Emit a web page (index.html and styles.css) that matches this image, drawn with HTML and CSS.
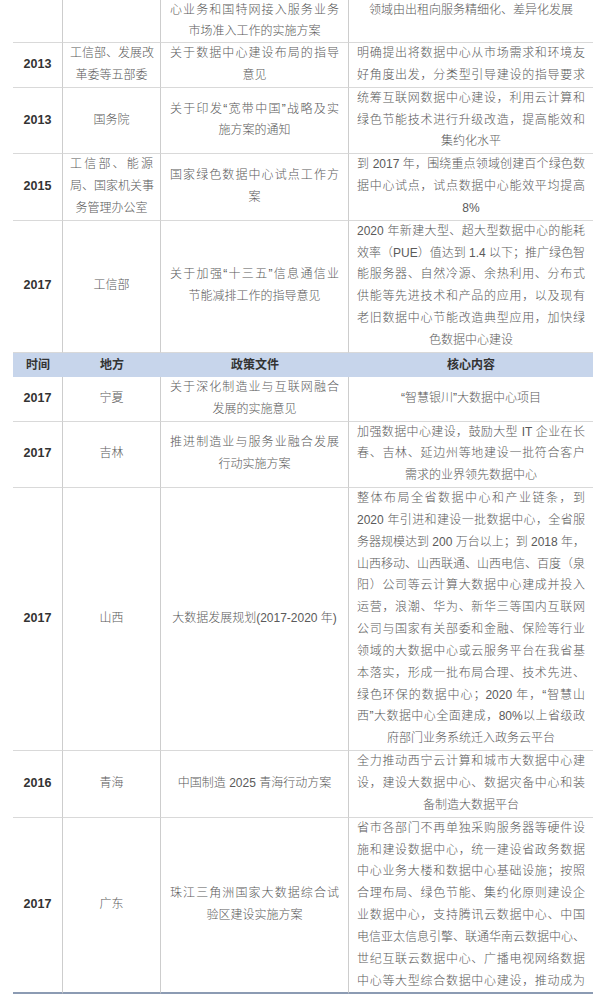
FILE: index.html
```html
<!DOCTYPE html>
<html lang="zh-CN">
<head>
<meta charset="utf-8">
<title>数据中心相关政策</title>
<link rel="stylesheet" href="styles.css">
</head>
<body>
<div class="policy">
  <!-- cropped top row -->
  <div class="cell year row-top"></div>
  <div class="cell place row-top"></div>
  <div class="cell doc row-top"><span class="l j">心业务和国特网接入服务业务</span><span class="l c">市场准入工作的实施方案</span></div>
  <div class="cell core row-top top"><span class="l c">领域由出租向服务精细化、差异化发展</span></div>

  <div class="cell year">2013</div>
  <div class="cell place"><span class="l j">工信部、发展改</span><span class="l c">革委等五部委</span></div>
  <div class="cell doc"><span class="l j">关于数据中心建设布局的指导</span><span class="l c">意见</span></div>
  <div class="cell core"><span class="l j">明确提出将数据中心从市场需求和环境友</span><span class="l j">好角度出发，分类型引导建设的指导要求</span></div>

  <div class="cell year">2013</div>
  <div class="cell place">国务院</div>
  <div class="cell doc"><span class="l j">关于印发“宽带中国”战略及实</span><span class="l c">施方案的通知</span></div>
  <div class="cell core"><span class="l j">统筹互联网数据中心建设，利用云计算和</span><span class="l j">绿色节能技术进行升级改造，提高能效和</span><span class="l c">集约化水平</span></div>

  <div class="cell year">2015</div>
  <div class="cell place"><span class="l j">工信部、能源</span><span class="l j">局、国家机关事</span><span class="l c">务管理办公室</span></div>
  <div class="cell doc"><span class="l j">国家绿色数据中心试点工作方</span><span class="l c">案</span></div>
  <div class="cell core"><span class="l j">到 2017 年，围绕重点领域创建百个绿色数</span><span class="l j">据中心试点，试点数据中心能效平均提高</span><span class="l c">8%</span></div>

  <div class="cell year">2017</div>
  <div class="cell place">工信部</div>
  <div class="cell doc"><span class="l j">关于加强“十三五”信息通信业</span><span class="l c">节能减排工作的指导意见</span></div>
  <div class="cell core"><span class="l j">2020 年新建大型、超大型数据中心的能耗</span><span class="l j">效率（PUE）值达到 1.4 以下；推广绿色智</span><span class="l j">能服务器、自然冷源、余热利用、分布式</span><span class="l j">供能等先进技术和产品的应用，以及现有</span><span class="l j">老旧数据中心节能改造典型应用，加快绿</span><span class="l c">色数据中心建设</span></div>

  <div class="head">时间</div>
  <div class="head">地方</div>
  <div class="head">政策文件</div>
  <div class="head">核心内容</div>

  <div class="cell year">2017</div>
  <div class="cell place">宁夏</div>
  <div class="cell doc"><span class="l j">关于深化制造业与互联网融合</span><span class="l c">发展的实施意见</span></div>
  <div class="cell core"><span class="l c">“智慧银川”大数据中心项目</span></div>

  <div class="cell year">2017</div>
  <div class="cell place">吉林</div>
  <div class="cell doc"><span class="l j">推进制造业与服务业融合发展</span><span class="l c">行动实施方案</span></div>
  <div class="cell core"><span class="l j">加强数据中心建设，鼓励大型 IT 企业在长</span><span class="l j">春、吉林、延边州等地建设一批符合客户</span><span class="l c">需求的业界领先数据中心</span></div>

  <div class="cell year">2017</div>
  <div class="cell place">山西</div>
  <div class="cell doc"><span class="l c">大数据发展规划(2017-2020 年)</span></div>
  <div class="cell core"><span class="l j">整体布局全省数据中心和产业链条，到</span><span class="l j">2020 年引进和建设一批数据中心，全省服</span><span class="l j">务器规模达到 200 万台以上；到 2018 年，</span><span class="l j">山西移动、山西联通、山西电信、百度（泉</span><span class="l j">阳）公司等云计算大数据中心建成并投入</span><span class="l j">运营，浪潮、华为、新华三等国内互联网</span><span class="l j">公司与国家有关部委和金融、保险等行业</span><span class="l j">领域的大数据中心或云服务平台在我省基</span><span class="l j">本落实，形成一批布局合理、技术先进、</span><span class="l j">绿色环保的数据中心；2020 年，“智慧山</span><span class="l j">西”大数据中心全面建成，80%以上省级政</span><span class="l c">府部门业务系统迁入政务云平台</span></div>

  <div class="cell year">2016</div>
  <div class="cell place">青海</div>
  <div class="cell doc"><span class="l c">中国制造 2025 青海行动方案</span></div>
  <div class="cell core"><span class="l j">全力推动西宁云计算和城市大数据中心建</span><span class="l j">设，建设大数据中心、数据灾备中心和装</span><span class="l c">备制造大数据平台</span></div>

  <div class="cell year row-last">2017</div>
  <div class="cell place row-last">广东</div>
  <div class="cell doc row-last"><span class="l j">珠江三角洲国家大数据综合试</span><span class="l c">验区建设实施方案</span></div>
  <div class="cell core row-last"><span class="l j">省市各部门不再单独采购服务器等硬件设</span><span class="l j">施和建设数据中心，统一建设省政务数据</span><span class="l j">中心业务大楼和数据中心基础设施；按照</span><span class="l j">合理布局、绿色节能、集约化原则建设企</span><span class="l j">业数据中心，支持腾讯云数据中心、中国</span><span class="l j">电信亚太信息引擎、联通华南云数据中心、</span><span class="l j">世纪互联云数据中心、广播电视网络数据</span><span class="l j">中心等大型综合数据中心建设，推动成为</span></div>
</div>
</body>
</html>
```

FILE: styles.css
```css
html, body {
  margin: 0;
  padding: 0;
  background: #ffffff;
}

body {
  font-family: "Liberation Sans", "Noto Sans CJK SC", sans-serif;
  font-size: 12px;
  font-weight: 300;
  color: #5a5a5a;
}

.policy {
  display: grid;
  grid-template-columns: 50px 98px 188px 244px;
  width: 580px;
  margin-left: 13px;
}

.cell {
  box-sizing: border-box;
  display: flex;
  flex-direction: column;
  justify-content: center;
  text-align: center;
  line-height: 21.85px;
  border-bottom: 1px solid #d9d9d9;
  border-right: 1px solid #cdcdcd;
}

.cell.core {
  border-right: none;
}

.cell.row-top {
  line-height: 21px;
}

.cell.top {
  justify-content: flex-start;
}

.cell.row-last {
  border-bottom: 2px solid #8c9bb3;
}

.year {
  font-weight: bold;
  font-size: 12.5px;
  color: #333333;
}

.place {
  padding: 0 7px;
}

.doc {
  padding: 0 9px;
}

.core {
  padding: 0 8px;
}

.l {
  display: block;
  white-space: nowrap;
}

.j {
  text-align: justify;
  text-align-last: justify;
}

.c {
  text-align: center;
}

.head {
  background: #c7d5eb;
  color: #333333;
  font-weight: bold;
  text-align: center;
  line-height: 22px;
  padding: 1px 0;
}
```
